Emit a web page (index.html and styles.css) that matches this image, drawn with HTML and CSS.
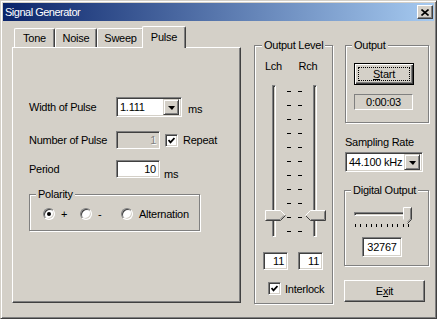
FILE: index.html
```html
<!DOCTYPE html>
<html lang="en">
<head>
  <meta charset="UTF-8">
  <title>Signal Generator</title>
  <link rel="stylesheet" href="styles.css">
</head>
<body>

  <div class="window">

    <!-- title bar -->
    <div class="titlebar">
      <span class="title">Signal Generator</span>
      <span class="close">
        <svg width="8" height="7" viewBox="0 0 8 7"><path d="M0.5 0.5 L7.5 6.5 M7.5 0.5 L0.5 6.5" stroke="#000" stroke-width="1.6" fill="none"/></svg>
      </span>
    </div>

    <div class="client">

      <!-- tab control -->
      <div class="tabctl">
        <div class="tabstrip">
          <div class="tab t-tone">Tone</div>
          <div class="tab t-noise">Noise</div>
          <div class="tab t-sweep">Sweep</div>
          <div class="tab t-pulse sel">Pulse</div>
        </div>
        <div class="panel">
          <div class="row r-width">
            <span class="lbl">Width of Pulse</span>
            <div class="combo c-width"><span class="ctext">1.111</span><span class="dd"></span></div>
            <span class="unit u-width">ms</span>
          </div>
          <div class="row r-count">
            <span class="lbl">Number of Pulse</span>
            <div class="edit e-pulse dis">1</div>
            <span class="chk c-repeat"><svg width="7" height="7" viewBox="0 0 7 7"><polyline points="0.5,3 2.5,5.3 6.5,1" stroke="#000" stroke-width="1.8" fill="none"/></svg></span>
            <span class="chklbl">Repeat</span>
          </div>
          <div class="row r-period">
            <span class="lbl">Period</span>
            <div class="edit e-pulse">10</div>
            <span class="unit u-period">ms</span>
          </div>
          <div class="group polarity">
            <span class="legend">Polarity</span>
            <div class="opts">
              <span class="opt o-plus"><span class="radio on"></span>+</span>
              <span class="opt o-minus"><span class="radio"></span>-</span>
              <span class="opt"><span class="radio"></span>Alternation</span>
            </div>
          </div>
        </div>
      </div>

      <!-- output level -->
      <div class="group levels">
        <span class="legend">Output Level</span>
        <div class="chhead"><span class="ch">Lch</span><span class="ch">Rch</span></div>
        <div class="sliders">
          <div class="vslider">
            <span class="vtrack"></span>
            <svg class="vthumb l" width="21" height="11" viewBox="0 0 21 11">
              <polygon points="0.5,0.5 15.5,0.5 20.5,5.5 15.5,10.5 0.5,10.5" fill="#d4d0c8"/>
              <polyline points="0.5,10 0.5,0.5 15.5,0.5 20,5" stroke="#fff" fill="none"/>
              <polyline points="0.5,10.5 15.5,10.5 20.5,5.5" stroke="#404040" fill="none"/>
              <polyline points="1.5,9.5 15,9.5 19,5.5" stroke="#808080" fill="none"/>
            </svg>
          </div>
          <div class="vticks t-left">
            <i></i><i></i><i></i><i></i><i></i><i></i><i></i><i></i><i></i><i></i><i></i>
          </div>
          <div class="vticks t-right">
            <i></i><i></i><i></i><i></i><i></i><i></i><i></i><i></i><i></i><i></i><i></i>
          </div>
          <div class="vslider s-right">
            <span class="vtrack"></span>
            <svg class="vthumb r" width="21" height="11" viewBox="0 0 21 11">
              <polygon points="20.5,0.5 5.5,0.5 0.5,5.5 5.5,10.5 20.5,10.5" fill="#d4d0c8"/>
              <polyline points="0.5,5.5 5.5,0.5 20,0.5" stroke="#fff" fill="none"/>
              <polyline points="1,6 5.5,10.5 20.5,10.5 20.5,0.5" stroke="#404040" fill="none"/>
              <polyline points="6,9.5 19.5,9.5 19.5,1.5" stroke="#808080" fill="none"/>
            </svg>
          </div>
        </div>
        <div class="levelvals">
          <div class="edit e-level">11</div>
          <div class="edit e-level">11</div>
        </div>
        <div class="interlock">
          <span class="chk"><svg width="7" height="7" viewBox="0 0 7 7"><polyline points="0.5,3 2.5,5.3 6.5,1" stroke="#000" stroke-width="1.8" fill="none"/></svg></span>
          <span class="chklbl">Interlock</span>
        </div>
      </div>

      <!-- right column -->
      <div class="rightcol">
        <div class="group output">
          <span class="legend">Output</span>
          <div class="btn default start"><span><u>S</u>tart</span></div>
          <div class="timer">0:00:03</div>
        </div>

        <div class="srlabel">Sampling Rate</div>
        <div class="combo c-rate"><span class="ctext">44.100 kHz</span><span class="dd"></span></div>

        <div class="group digital">
          <span class="legend">Digital Output</span>
          <div class="hslider">
            <span class="htrack"></span>
            <div class="hticks">
              <i></i><i></i><i></i><i></i><i></i><i></i><i></i><i></i><i></i><i></i><i></i>
            </div>
            <svg class="hthumb" width="9" height="17" viewBox="0 0 9 17">
              <polygon points="0.5,0.5 8.5,0.5 8.5,12.5 4.5,16.5 0.5,12.5" fill="#d4d0c8"/>
              <polyline points="0.5,12.5 0.5,0.5 8,0.5" stroke="#fff" fill="none"/>
              <polyline points="8.5,0.5 8.5,12.5 4.5,16.5" stroke="#404040" fill="none"/>
              <polyline points="7.5,1.5 7.5,12 4.5,15" stroke="#808080" fill="none"/>
            </svg>
          </div>
          <div class="edit e-digital">32767</div>
        </div>

        <div class="btn exit"><span>E<u>x</u>it</span></div>
      </div>

    </div>
  </div>

</body>
</html>
```

FILE: styles.css
```css
* {
  box-sizing: border-box;
}

body {
  margin: 0;
  font-family: "Liberation Sans", Arial, sans-serif;
  font-size: 11px;
  letter-spacing: -0.25px;
  color: #000;
  background: #d4d0c8;
}

/* window frame */
.window {
  width: 437px;
  height: 319px;
  border: 1px solid;
  border-color: #d4d0c8 #404040 #404040 #d4d0c8;
  box-shadow: inset 1px 1px #fff, inset -1px -1px #808080;
  padding: 2px;
  background: #d4d0c8;
  white-space: nowrap;
}

.titlebar {
  height: 18px;
  display: flex;
  align-items: center;
  justify-content: space-between;
  padding: 0 1px 0 2px;
  background: linear-gradient(to right, #0a246a, #a6caf0);
  color: #fff;
}

.title {
  letter-spacing: -0.5px;
}

.close {
  width: 16px;
  height: 14px;
  display: flex;
  align-items: center;
  justify-content: center;
  background: #d4d0c8;
  border: 1px solid;
  border-color: #fff #404040 #404040 #fff;
  box-shadow: inset -1px -1px #808080;
}

.client {
  display: flex;
  align-items: flex-start;
}

/* tabs */
.tabctl {
  margin: 5px 0 0 9px;
  width: 229px;
}

.tabstrip {
  display: flex;
  align-items: flex-end;
  height: 21px;
  padding-left: 2px;
}

.tab {
  height: 19px;
  line-height: 18px;
  text-align: center;
  border-top: 1px solid #fff;
  border-left: 1px solid #fff;
  border-right: 1px solid #404040;
  box-shadow: inset -1px 0 #808080;
  border-radius: 2px 2px 0 0;
}

.t-tone { width: 41px; }
.t-noise { width: 42px; }
.t-sweep { width: 47px; }

.tab.sel {
  width: 44px;
  height: 22px;
  line-height: 20px;
  margin: 0 -2px -1px;
  position: relative;
  z-index: 1;
  background: #d4d0c8;
}

.panel {
  height: 256px;
  border: 1px solid;
  border-color: #fff #404040 #404040 #fff;
  box-shadow: inset -1px -1px #808080;
  padding: 49px 0 0 16px;
}

.row {
  display: flex;
  align-items: center;
}

.lbl {
  width: 87px;
}

.r-count { margin-top: 14px; }
.r-period { margin-top: 11px; }

.unit {
  align-self: flex-end;
}

.u-width { margin: 0 0 2px 6px; }
.u-period { margin: 0 0 -2px 4px; }

/* common controls */
.combo {
  display: flex;
  align-items: center;
  height: 20px;
  padding: 2px;
  background: #fff;
  border: 1px solid;
  border-color: #808080 #fff #fff #808080;
  box-shadow: inset 1px 1px #404040, inset -1px -1px #d4d0c8;
}

.ctext {
  flex: 1;
  min-width: 0;
  overflow: hidden;
  padding-left: 1px;
}

.c-width { width: 66px; }

.dd {
  flex: none;
  width: 16px;
  height: 16px;
  display: flex;
  align-items: center;
  justify-content: center;
  background: #d4d0c8;
  border: 1px solid;
  border-color: #d4d0c8 #404040 #404040 #d4d0c8;
  box-shadow: inset 1px 1px #fff, inset -1px -1px #808080;
}

.dd::after {
  content: "";
  border-left: 4px solid transparent;
  border-right: 3px solid transparent;
  border-top: 4px solid #000;
  margin-top: 1px;
}

.edit {
  height: 18px;
  display: flex;
  align-items: center;
  justify-content: flex-end;
  padding: 0 3px;
  background: #fff;
  border: 1px solid;
  border-color: #808080 #fff #fff #808080;
  box-shadow: inset 1px 1px #404040, inset -1px -1px #d4d0c8;
}

.edit.dis {
  background: #d4d0c8;
  color: #808080;
  text-shadow: 1px 1px #fff;
}

.e-pulse { width: 44px; }

.chk {
  width: 13px;
  height: 13px;
  display: flex;
  align-items: center;
  justify-content: center;
  background: #fff;
  border: 1px solid;
  border-color: #808080 #fff #fff #808080;
  box-shadow: inset 1px 1px #404040, inset -1px -1px #d4d0c8;
}

.c-repeat { margin-left: 5px; }

.chklbl {
  margin-left: 5px;
}

/* group boxes */
.group {
  position: relative;
  border: 1px solid #808080;
  box-shadow: inset 1px 1px #fff, 1px 1px #fff;
}

.legend {
  position: absolute;
  top: -7px;
  left: 6px;
  padding: 0 2px;
  line-height: 13px;
  background: #d4d0c8;
}

.polarity {
  margin-top: 16px;
  width: 171px;
  height: 37px;
}

.opts {
  display: flex;
  align-items: center;
  padding: 13px 0 0 13px;
}

.opt {
  display: flex;
  align-items: center;
  gap: 6px;
}

.o-plus { width: 37px; }
.o-minus { width: 41px; }

.radio {
  position: relative;
  width: 12px;
  height: 12px;
  border-radius: 50%;
  background: #fff;
  border: 1px solid;
  border-color: #808080 #fff #fff #808080;
  box-shadow: inset 1px 1px #404040, inset -1px -1px #d4d0c8;
}

.radio.on::after {
  content: "";
  position: absolute;
  left: 3px;
  top: 3px;
  width: 4px;
  height: 4px;
  border-radius: 50%;
  background: #000;
}

/* output level */
.levels {
  margin: 24px 0 0 13px;
  width: 79px;
  height: 259px;
}

.levels .legend { left: 7px; }

.chhead {
  display: flex;
  padding: 14px 0 0 10px;
  line-height: 13px;
}

.ch { width: 40px; }

.sliders {
  display: flex;
  margin-top: 12px;
  padding-left: 9px;
}

.vslider {
  position: relative;
  width: 22px;
  height: 152px;
  padding-left: 8px;
}

.s-right { margin-left: 3px; }

.vtrack {
  display: block;
  width: 4px;
  height: 152px;
  border: 1px solid;
  border-color: #808080 #fff #fff #808080;
  box-shadow: inset 1px 1px #404040;
}

.vthumb {
  position: absolute;
  top: 125px;
}

.vthumb.l { left: 1px; }
.vthumb.r { left: 0; }

.vticks {
  display: flex;
  flex-direction: column;
  justify-content: space-between;
  width: 4px;
  height: 152px;
  padding: 6px 0 5px;
}

.vticks i {
  display: block;
  height: 1px;
  background: #000;
}

.t-left { margin-left: 1px; }
.t-right { margin-left: 7px; }

.levelvals {
  display: flex;
  gap: 10px;
  margin-top: 15px;
  padding-left: 8px;
}

.e-level { width: 25px; }

.interlock {
  display: flex;
  align-items: center;
  margin-top: 12px;
  padding-left: 13px;
}

.interlock .chklbl { margin-left: 4px; }

/* right column */
.rightcol {
  margin: 24px 0 0 11px;
  width: 86px;
}

.output {
  margin-left: 1px;
  width: 84px;
  height: 78px;
  padding: 17px 0 0 8px;
}

.btn {
  position: relative;
  display: flex;
  align-items: center;
  justify-content: center;
  background: #d4d0c8;
  border: 1px solid;
  border-color: #fff #404040 #404040 #fff;
  box-shadow: inset -1px -1px #808080;
}

.btn.default {
  border: 1px solid #000;
  box-shadow: inset 1px 1px #fff, inset -1px -1px #404040, inset -2px -2px #808080;
}

.btn.default::after {
  content: "";
  position: absolute;
  inset: 3px;
  border: 1px dotted #000;
}

.start {
  width: 60px;
  height: 22px;
}

.timer {
  width: 59px;
  height: 16px;
  margin-top: 9px;
  line-height: 14px;
  text-align: center;
  border: 1px solid;
  border-color: #808080 #fff #fff #808080;
}

.srlabel {
  margin: 13px 0 0 1px;
  line-height: 13px;
}

.c-rate {
  width: 78px;
  margin: 3px 0 0 1px;
}

.digital {
  margin-top: 18px;
  width: 85px;
  height: 76px;
}

.hslider {
  position: relative;
  width: 57px;
  height: 21px;
  margin: 16px 0 0 9px;
  padding-top: 5px;
}

.htrack {
  display: block;
  height: 4px;
  border: 1px solid;
  border-color: #808080 #fff #fff #808080;
  box-shadow: inset 1px 1px #404040;
}

.hticks {
  display: flex;
  justify-content: space-between;
  width: 54px;
  height: 3px;
  margin: 8px 0 0 1px;
}

.hticks i {
  display: block;
  width: 1px;
  background: #000;
}

.hthumb {
  position: absolute;
  left: 49px;
  top: 0;
}

.e-digital {
  width: 40px;
  height: 20px;
  margin: 9px 0 0 17px;
  justify-content: center;
}

.exit {
  width: 81px;
  height: 22px;
  margin-top: 14px;
}
```
